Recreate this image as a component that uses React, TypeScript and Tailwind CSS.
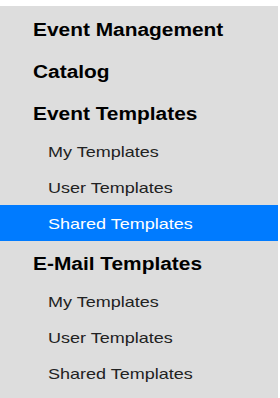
import React from "react";

type Item = { label: string; active?: boolean };
type Section = { title: string; items?: Item[] };

const sections: Section[] = [
  { title: "Event Management" },
  { title: "Catalog" },
  {
    title: "Event Templates",
    items: [
      { label: "My Templates" },
      { label: "User Templates" },
      { label: "Shared Templates", active: true },
    ],
  },
  {
    title: "E-Mail Templates",
    items: [
      { label: "My Templates" },
      { label: "User Templates" },
      { label: "Shared Templates" },
    ],
  },
];

export default function App() {
  return (
    <div className="w-[280px] h-[398px] bg-white pt-[6px] overflow-hidden font-['Liberation_Sans',Arial,sans-serif]">
      <nav className="w-[278px] h-[392px] bg-[#dddddd] pt-[1px]">
        {sections.map((s) => (
          <div key={s.title}>
            <div className="h-[42px] pt-[5px] pl-[33px] flex items-center text-[18px] font-bold text-black">
              {/* text in the shot is stretched a bit wider than plain Arial */}
              <span className="inline-block origin-left scale-x-[1.16]">{s.title}</span>
            </div>
            {s.items?.map((it) => (
              <div
                key={it.label}
                className={`h-[36px] pt-[2px] pl-[48px] flex items-center text-[15px] ${
                  it.active ? "bg-[#007bff] text-white" : "text-[#222222]"
                }`}
              >
                <span className="inline-block origin-left scale-x-[1.2]">{it.label}</span>
              </div>
            ))}
          </div>
        ))}
      </nav>
    </div>
  );
}
